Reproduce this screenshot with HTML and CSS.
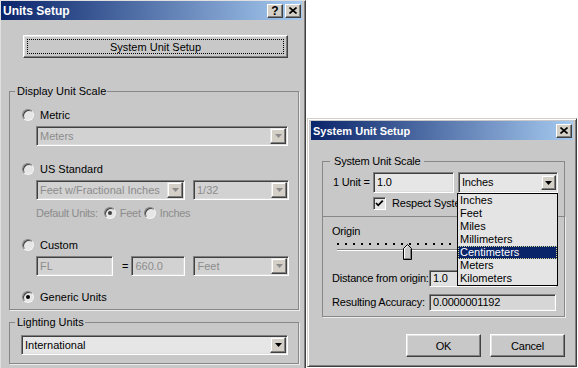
FILE: index.html
```html
<!DOCTYPE html>
<html>
<head>
  <meta charset="utf-8">
  <title>Units Setup</title>
  <link rel="stylesheet" href="styles.css">
</head>
<body>
  <div class="desk">
    <!-- Main units window -->
    <section class="win units">
      <div class="titlebar">
        <span class="title">Units Setup</span>
        <span class="cap-btns">
          <span class="cap-btn">?</span>
          <span class="cap-btn">
            <svg width="8" height="7" viewBox="0 0 8 7"><path d="M0.5 0.5l7 6M7.5 0.5l-7 6" stroke="#000" stroke-width="1.6"/></svg>
          </span>
        </span>
      </div>
      <div class="units-body">
        <div class="btn btn-setup"><span class="focus">System Unit Setup</span></div>

        <div class="group scale-group">
          <span class="group-label">Display Unit Scale</span>
          <div class="opt opt-metric"><span class="radio"></span>Metric</div>
          <div class="combo off combo-meters">
            <span class="val">Meters</span>
            <span class="arrow"><svg width="7" height="4" viewBox="0 0 7 4"><path d="M0 0h7L3.5 4z" fill="currentColor"/></svg></span>
          </div>
          <div class="opt opt-us"><span class="radio"></span>US Standard</div>
          <div class="combo-row row-us">
            <div class="combo off combo-feet">
              <span class="val">Feet w/Fractional Inches</span>
              <span class="arrow"><svg width="7" height="4" viewBox="0 0 7 4"><path d="M0 0h7L3.5 4z" fill="currentColor"/></svg></span>
            </div>
            <div class="combo off combo-frac">
              <span class="val">1/32</span>
              <span class="arrow"><svg width="7" height="4" viewBox="0 0 7 4"><path d="M0 0h7L3.5 4z" fill="currentColor"/></svg></span>
            </div>
          </div>
          <div class="default-units">
            <span>Default Units:</span>
            <span class="radio on dim"></span><span class="du-feet">Feet</span>
            <span class="radio"></span><span class="du-inches">Inches</span>
          </div>
          <div class="opt opt-custom"><span class="radio"></span>Custom</div>
          <div class="combo-row row-custom">
            <div class="field off field-fl">FL</div>
            <span class="eq">=</span>
            <div class="field off field-scale">660.0</div>
            <div class="combo off combo-unit">
              <span class="val">Feet</span>
              <span class="arrow"><svg width="7" height="4" viewBox="0 0 7 4"><path d="M0 0h7L3.5 4z" fill="currentColor"/></svg></span>
            </div>
          </div>
          <div class="opt opt-generic"><span class="radio on"></span>Generic Units</div>
        </div>

        <div class="group light-group">
          <span class="group-label">Lighting Units</span>
          <div class="combo combo-light">
            <span class="val">International</span>
            <span class="arrow"><svg width="7" height="4" viewBox="0 0 7 4"><path d="M0 0h7L3.5 4z" fill="currentColor"/></svg></span>
          </div>
        </div>
      </div>
    </section>

    <!-- System unit dialog -->
    <section class="win sus">
      <div class="titlebar sus-title">
        <span class="title">System Unit Setup</span>
        <span class="cap-btns">
          <span class="cap-btn">
            <svg width="8" height="7" viewBox="0 0 8 7"><path d="M0.5 0.5l7 6M7.5 0.5l-7 6" stroke="#000" stroke-width="1.6"/></svg>
          </span>
        </span>
      </div>
      <div class="sus-body">
        <div class="group sys-group">
          <span class="group-label">System Unit Scale</span>
          <div class="unit-row">
            <span class="unit-label">1 Unit =</span>
            <div class="field field-unit">1.0</div>
            <div class="combo combo-inches">
              <span class="val">Inches</span>
              <span class="arrow"><svg width="7" height="4" viewBox="0 0 7 4"><path d="M0 0h7L3.5 4z" fill="currentColor"/></svg></span>
              <ul class="drop-list">
                <li>Inches</li>
                <li>Feet</li>
                <li>Miles</li>
                <li>Millimeters</li>
                <li class="sel">Centimeters</li>
                <li>Meters</li>
                <li>Kilometers</li>
              </ul>
            </div>
          </div>
          <div class="respect">
            <span class="check"><svg width="11" height="11" viewBox="0 0 11 11"><path d="M2 5l2.2 2.3L8.8 2.6" fill="none" stroke="#000" stroke-width="1.8"/></svg></span>
            <!-- the open list hides the end of this label -->
            <span class="respect-text">Respect System Units in Files</span>
          </div>
        </div>

        <div class="group origin-group">
          <div class="origin-label">Origin</div>
          <div class="slider">
            <div class="ticks"></div>
            <div class="track"></div>
            <svg class="thumb" width="9" height="16" viewBox="0 0 9 16">
              <path d="M0.5 15.5V4.5L4.5 0.5L8.5 4.5V15.5Z" fill="#c8c8c8" stroke="#000"/>
              <path d="M1.5 14.5V4.9L4.5 1.9" fill="none" stroke="#fff"/>
              <path d="M7.5 5V14.5H1.5" fill="none" stroke="#808080"/>
            </svg>
          </div>
          <div class="num-row row-dist">
            <span class="num-label">Distance from origin:</span>
            <div class="field field-num">1.0</div>
          </div>
          <div class="num-row row-acc">
            <span class="num-label">Resulting Accuracy:</span>
            <div class="field field-num field-acc">0.0000001192</div>
          </div>
        </div>

        <div class="dlg-buttons">
          <div class="btn btn-dlg">OK</div>
          <div class="btn btn-dlg">Cancel</div>
        </div>
      </div>
    </section>
  </div>
</body>
</html>
```

FILE: styles.css
```css
* {
  box-sizing: border-box;
}
body {
  margin: 0;
  background: #fff;
  font-family: "Liberation Sans", Arial, sans-serif;
  font-size: 11px;
  color: #000;
}
.desk {
  display: flex;
  align-items: flex-start;
  width: 578px;
  height: 368px;
  overflow: hidden;
}
.win {
  background: #c8c8c8;
  flex: none;
}

/* Title bars */
.titlebar {
  display: flex;
  align-items: center;
  justify-content: space-between;
  background: linear-gradient(to right, #0a246a, #a6caf0);
  color: #fff;
  font-weight: bold;
}
.title {
  padding-left: 2px;
}
.cap-btns {
  display: flex;
  gap: 2px;
  margin-right: 1px;
}
.cap-btn {
  display: flex;
  align-items: center;
  justify-content: center;
  width: 16px;
  height: 14px;
  background: #d4d0c8;
  border: 1px solid;
  border-color: #fff #404040 #404040 #fff;
  box-shadow: inset -1px -1px #808080;
  color: #000;
  font-size: 12px;
  font-weight: bold;
}

/* Units window */
.units {
  width: 306px;
  height: 368px;
  border-left: 1px solid #e0e0e0;
  border-top: 1px solid #e0e0e0;
  border-right: 1px solid #404040;
  box-shadow: inset -1px 0 #808080;
  padding-right: 3px;
}
.units .titlebar {
  height: 19px;
  font-size: 12px;
}
.units-body {
  padding: 15px 0 0 8px;
}

/* Buttons */
.btn {
  display: flex;
  align-items: center;
  justify-content: center;
  background: #c8c8c8;
  border: 1px solid;
  border-color: #fff #404040 #404040 #fff;
  box-shadow: inset -1px -1px #808080, inset 1px 1px #e4e4e4;
}
.btn-setup {
  margin-left: 14px;
  width: 265px;
  height: 23px;
  padding: 3px;
}
.btn-setup .focus {
  display: flex;
  align-items: center;
  justify-content: center;
  width: 100%;
  height: 100%;
  border: 1px dotted #000;
}

/* Group boxes */
.group {
  border: 1px solid #888;
  box-shadow: 1px 1px 0 #ececec;
  line-height: 13px;
}
.group-label {
  display: block;
  width: fit-content;
  height: 13px;
  margin: -7px 0 0 5px;
  padding: 0 1px 0 2px;
  background: #c8c8c8;
}
.scale-group {
  width: 290px;
  height: 219px;
  margin-top: 33px;
}
.light-group {
  width: 290px;
  height: 42px;
  margin-top: 12px;
}

/* Radio options */
.opt {
  display: flex;
  align-items: center;
  height: 14px;
  padding-left: 12px;
}
.opt .radio {
  margin-right: 6px;
}
.radio {
  position: relative;
  flex: none;
  width: 12px;
  height: 12px;
  border-radius: 50%;
  border: 1px solid;
  border-color: #808080 #f4f4f4 #f4f4f4 #808080;
  box-shadow: inset 1px 1px #404040;
  background: #e6e6e6;
}
.radio.on::after {
  content: "";
  position: absolute;
  left: 3px;
  top: 3px;
  width: 4px;
  height: 4px;
  border-radius: 50%;
  background: #000;
}
.radio.dim.on::after {
  background: #404040;
}
.opt-metric { margin-top: 10px; }
.opt-us { margin-top: 16px; }
.opt-custom { margin-top: 18px; }
.opt-generic { margin-top: 14px; }

/* Combo boxes and fields */
.combo, .field {
  display: flex;
  align-items: center;
  height: 20px;
  border: 1px solid;
  border-color: #808080 #fff #fff #808080;
  box-shadow: inset 1px 1px #404040, inset -1px -1px #dcdcdc;
  background: #e6e6e6;
}
.combo {
  position: relative;
  padding: 1px 1px 1px 3px;
}
.field {
  padding-left: 3px;
}
.combo .val {
  flex: 1;
  white-space: nowrap;
  overflow: hidden;
}
.combo .arrow {
  display: flex;
  align-items: center;
  justify-content: center;
  flex: none;
  width: 16px;
  height: 16px;
  background: #d4d0c8;
  border: 1px solid;
  border-color: #e8e8e8 #404040 #404040 #e8e8e8;
  box-shadow: inset -1px -1px #808080, inset 1px 1px #fff;
  color: #000;
}
.off {
  background: #d2d2d2;
  color: #8c8c8c;
}
.off .arrow {
  color: #8c8c8c;
}
.combo-meters {
  width: 252px;
  margin: 4px 0 0 26px;
}
.combo-row {
  display: flex;
  align-items: center;
  margin: 4px 0 0 26px;
}
.combo-feet { width: 149px; }
.combo-frac { width: 96px; margin-left: 8px; }
.default-units {
  display: flex;
  align-items: center;
  height: 14px;
  margin: 6px 0 0 26px;
  color: #8c8c8c;
  letter-spacing: -0.3px;
}
.default-units .radio {
  margin-left: 6px;
}
.du-feet { margin-left: 4px; }
.default-units .du-feet + .radio { margin-left: 3px; }
.du-inches { margin-left: 4px; }
.field-fl { width: 77px; }
.eq { margin: 0 3px 0 9px; }
.field-scale { width: 54px; }
.combo-unit { width: 96px; margin-left: 8px; }
.combo-light {
  width: 267px;
  margin: 6px 0 0 11px;
}

/* System unit dialog */
.sus {
  position: relative;
  width: 270px;
  height: 249px;
  margin: 118px 0 0 1px;
  border: 1px solid;
  border-color: #d4d0c8 #404040 #404040 #d4d0c8;
  box-shadow: inset 1px 1px #fff, inset -1px -1px #808080;
  padding: 2px 3px 3px 3px;
}
.sus-title {
  height: 19px;
}
.sus-body {
  padding-left: 11px;
  letter-spacing: -0.2px;
}
.sus .group-label {
  margin-left: 7px;
  padding: 0 4px;
}
.sys-group {
  width: 243px;
  height: 56px;
  margin-top: 21px;
  box-shadow: none;
}
.unit-row {
  display: flex;
  align-items: center;
  margin-top: 4px;
  padding-left: 10px;
}
.unit-label {
  width: 40px;
}
.field-unit {
  width: 81px;
  height: 21px;
}
.combo-inches {
  width: 100px;
  height: 21px;
  margin-left: 4px;
  padding: 2px 1px 2px 3px;
}
.combo-inches .arrow {
  width: 15px;
  height: 15px;
}
.drop-list {
  position: absolute;
  left: -2px;
  top: calc(100% + 1px);
  z-index: 2;
  width: 101px;
  height: 93px;
  margin: 0;
  padding: 0;
  list-style: none;
  border: 1px solid #000;
  background: #e4e4e4;
  letter-spacing: 0;
}
.drop-list li {
  height: 13px;
  line-height: 13px;
  padding-left: 2px;
}
.drop-list li.sel {
  background: #0a246a;
  color: #fff;
  outline: 1px dotted #d8d890;
  outline-offset: -1px;
}
.respect {
  display: flex;
  align-items: center;
  height: 13px;
  margin: 4px 0 0 50px;
}
.respect-text {
  width: 65px;
  overflow: hidden;
  white-space: nowrap;
}
.check {
  display: flex;
  align-items: center;
  justify-content: center;
  flex: none;
  width: 13px;
  height: 13px;
  margin-right: 6px;
  border: 1px solid;
  border-color: #808080 #fff #fff #808080;
  box-shadow: inset 1px 1px #404040;
  background: #e6e6e6;
}
.origin-group {
  width: 243px;
  height: 101px;
  margin-top: -1px;
}
.origin-label {
  margin: 8px 0 0 9px;
}
.slider {
  position: relative;
  width: 218px;
  height: 17px;
  margin: 3px 0 0 14px;
}
.ticks {
  height: 2px;
  margin-top: 5px;
  background-image: linear-gradient(to right, #000 2px, transparent 2px);
  background-size: 8px 2px;
}
.track {
  height: 2px;
  margin-top: 4px;
  border-top: 1px solid #808080;
  border-bottom: 1px solid #fff;
}
.thumb {
  position: absolute;
  left: 66px;
  top: 1px;
}
.num-row {
  display: flex;
  align-items: center;
  padding-left: 9px;
}
.row-dist { margin-top: 10px; }
.row-acc { margin-top: 7px; }
.num-label {
  flex: none;
  width: 97px;
  white-space: nowrap;
}
.field-num {
  width: 127px;
  height: 17px;
  background: #e0e0e0;
}
.field-acc {
  background: #d6d6d6;
}
.dlg-buttons {
  display: flex;
  gap: 9px;
  margin: 17px 0 0 84px;
}
.btn-dlg {
  width: 75px;
  height: 23px;
}
```
